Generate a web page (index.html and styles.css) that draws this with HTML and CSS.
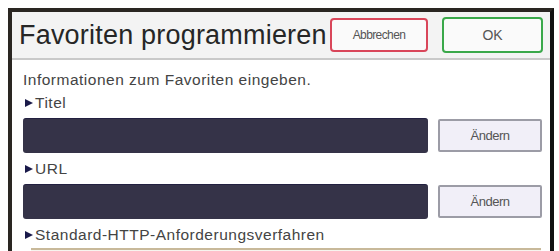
FILE: index.html
```html
<!DOCTYPE html>
<html>
<head>
<meta charset="utf-8">
<link rel="stylesheet" href="styles.css">
</head>
<body>
<div class="frame">
  <div class="header">
    <div class="title">Favoriten programmieren</div>
    <button class="btn cancel">Abbrechen</button>
    <button class="btn ok">OK</button>
  </div>
  <div class="content">
    <div class="intro">Informationen zum Favoriten eingeben.</div>
    <div class="label"><span class="tri"></span>Titel</div>
    <div class="row">
      <div class="field"></div>
      <button class="btn change">Ändern</button>
    </div>
    <div class="label"><span class="tri"></span>URL</div>
    <div class="row">
      <div class="field"></div>
      <button class="btn change">Ändern</button>
    </div>
    <div class="label"><span class="tri"></span>Standard-HTTP-Anforderungsverfahren</div>
    <div class="next"></div>
  </div>
</div>
</body>
</html>
```
FILE: styles.css
```css
html, body {
  margin: 0;
  padding: 0;
  background: #ffffff;
  overflow: hidden;
}
body {
  padding: 8px 0 0 8px;
  width: 559px;
  height: 251px;
  box-sizing: border-box;
  font-family: "Liberation Sans", Arial, sans-serif;
  color: #333;
}
.frame {
  width: 546px;
  height: 243px;
  border-left: 4px solid #2a2622;
  border-top: 4px solid #2a2622;
  border-right: 4px solid #111;
  box-sizing: border-box;
  background: #fff;
  overflow: hidden;
}
.header {
  height: 46px;
  background: #f3f3f3;
  border-bottom: 2px solid #c9c9c9;
  display: flex;
  align-items: center;
  padding-left: 7px;
}
.title {
  font-size: 27px;
  color: #262626;
  width: 311px;
  flex: none;
  white-space: nowrap;
  letter-spacing: 0.2px;
}
.btn {
  font-family: "Liberation Sans", Arial, sans-serif;
  background: #fafafa;
  border-radius: 4px;
  box-sizing: border-box;
  padding: 0;
  color: #555;
  cursor: default;
  flex: none;
}
.cancel {
  width: 98px;
  height: 34px;
  border: 2px solid #d9465a;
  font-size: 12px;
  letter-spacing: -0.6px;
}
.ok {
  margin-left: 14px;
  width: 101px;
  height: 36px;
  border: 2px solid #3aa84a;
  font-size: 14px;
}
.content {
  padding: 8px 0 0 11px;
}
.intro {
  font-size: 15.5px;
  color: #444;
  height: 24px;
  line-height: 24px;
  letter-spacing: 0.5px;
}
.label {
  font-size: 15.5px;
  color: #444;
  height: 22px;
  display: flex;
  align-items: center;
  padding-left: 2px;
  letter-spacing: 0.5px;
}
.tri {
  width: 0;
  height: 0;
  border-top: 4.5px solid transparent;
  border-bottom: 4.5px solid transparent;
  border-left: 8px solid #1a1a4a;
  margin-right: 2px;
}
.row {
  display: flex;
  align-items: center;
  gap: 10px;
  height: 35px;
  margin: 4px 0 5px;
}
.field {
  width: 405px;
  height: 35px;
  background: #353348;
  border-radius: 3px;
  border-top: 1px solid #222040;
  box-sizing: border-box;
}
.change {
  width: 104px;
  height: 33px;
  background: #f1eff8;
  border: 2px solid #9c9ca6;
  border-radius: 2px;
  font-size: 13px;
  letter-spacing: -0.5px;
}
.next {
  margin: 2px 0 0 8px;
  width: 510px;
  height: 6px;
  border-top: 2px solid #c8b99a;
  background: #f7f4ee;
}
```
